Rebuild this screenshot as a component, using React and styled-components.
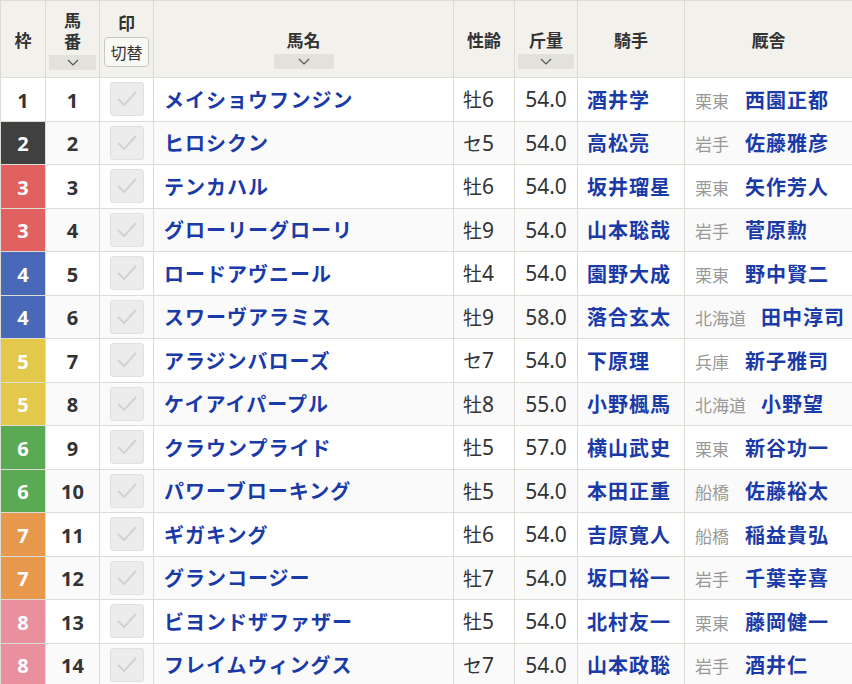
import React from "react";
import styled, { createGlobalStyle } from "styled-components";

const G = createGlobalStyle`
  body { margin: 0; background: #fff; font-family: "Noto Sans CJK JP", "Noto Sans", sans-serif; }
`;

const Table = styled.table`
  border-collapse: collapse;
  table-layout: fixed;
  width: 852px;
  border-left: 1px solid #dcdcd4;
  border-top: 1px solid #dcdcd4;
`;
const Th = styled.th`
  background: #f2f1ec;
  border: 1px solid #dcdcd4;
  height: 76px;
  padding: 0;
  font-size: 17px;
  font-weight: 700;
  color: #333;
  vertical-align: middle;
`;
const HeadStack = styled.div`
  display: flex; flex-direction: column; align-items: center; justify-content: center;
  line-height: 21px;
`;
const Sort = styled.div`
  width: ${p => p.w}px; height: 15px; background: #e2e1dc;
  display: flex; align-items: center; justify-content: center;
  margin-top: 4px;
`;
const Toggle = styled.div`
  border: 1px solid #c8c8c0; border-radius: 4px; background: #f8f8f5;
  font-size: 16px; font-weight: 400; padding: 2px 5px; line-height: 24px; margin-top: 4px;
`;
const Tr = styled.tr`
  background: ${p => (p.alt ? "#fafafa" : "#fff")};
`;
const Td = styled.td`
  border: 1px solid #dcdcd4;
  height: 42.5px;
  padding: 0 ${p => p.pad || 0}px;
  text-align: ${p => p.align || "center"};
  font-size: 19px;
  color: #333;
  white-space: nowrap;
`;
const Waku = styled(Td)`
  background: ${p => p.bg};
  color: ${p => (p.light ? "#333" : "#fff")};
  font-weight: 700;
  font-size: 20px;
`;
const Bold = styled.span`font-weight: 700; color: #333; font-size: 20px;`;
const Link = styled.span`font-weight: 700; color: #1a3aa8; font-size: 20px; letter-spacing: 1px;`;
const Area = styled.span`color: #999; font-size: 17px; display: inline-block; width: 50px;`;
const Check = styled.div`
  width: 32px; height: 32px; margin: 0 auto; border-radius: 3px;
  background: #ececec; border: 1px solid #e0e0e0;
  display: flex; align-items: center; justify-content: center;
`;
const Num = styled.span`font-family: "Noto Sans", sans-serif; font-size: ${p => p.size || 20}px;`;

const colors = { 1: ["#fff", true], 2: ["#404040"], 3: ["#e0615f"], 4: ["#4a68b8"], 5: ["#e3c94b"], 6: ["#5aaa55"], 7: ["#e8984c"], 8: ["#e8909e"] };

const rows = [
  [1, 1, "メイショウフンジン", "牡6", "54.0", "酒井学", "栗東", "西園正都"],
  [2, 2, "ヒロシクン", "セ5", "54.0", "高松亮", "岩手", "佐藤雅彦"],
  [3, 3, "テンカハル", "牡6", "54.0", "坂井瑠星", "栗東", "矢作芳人"],
  [3, 4, "グローリーグローリ", "牡9", "54.0", "山本聡哉", "岩手", "菅原勲"],
  [4, 5, "ロードアヴニール", "牡4", "54.0", "園野大成", "栗東", "野中賢二"],
  [4, 6, "スワーヴアラミス", "牡9", "58.0", "落合玄太", "北海道", "田中淳司"],
  [5, 7, "アラジンバローズ", "セ7", "54.0", "下原理", "兵庫", "新子雅司"],
  [5, 8, "ケイアイパープル", "牡8", "55.0", "小野楓馬", "北海道", "小野望"],
  [6, 9, "クラウンプライド", "牡5", "57.0", "横山武史", "栗東", "新谷功一"],
  [6, 10, "パワーブローキング", "牡5", "54.0", "本田正重", "船橋", "佐藤裕太"],
  [7, 11, "ギガキング", "牡6", "54.0", "吉原寛人", "船橋", "稲益貴弘"],
  [7, 12, "グランコージー", "牡7", "54.0", "坂口裕一", "岩手", "千葉幸喜"],
  [8, 13, "ビヨンドザファザー", "牡5", "54.0", "北村友一", "栗東", "藤岡健一"],
  [8, 14, "フレイムウィングス", "セ7", "54.0", "山本政聡", "岩手", "酒井仁"],
];

const Chev = () => (
  <svg width="12" height="7" viewBox="0 0 12 7"><path d="M1 1l5 5 5-5" fill="none" stroke="#555" strokeWidth="1.2" /></svg>
);
const Tick = () => (
  <svg width="22" height="18" viewBox="0 0 22 18"><path d="M2 9l6 6L20 2" fill="none" stroke="#d2d2d2" strokeWidth="2" /></svg>
);

export default function App() {
  return (
    <>
      <G />
      <Table>
        <colgroup>
          <col style={{ width: 45 }} /><col style={{ width: 54 }} /><col style={{ width: 54 }} />
          <col style={{ width: 300 }} /><col style={{ width: 61 }} /><col style={{ width: 63 }} />
          <col style={{ width: 107 }} /><col style={{ width: 168 }} />
        </colgroup>
        <thead>
          <tr>
            <Th>枠</Th>
            <Th><HeadStack><span>馬</span><span>番</span><Sort w={47}><Chev /></Sort></HeadStack></Th>
            <Th><HeadStack><span>印</span><Toggle>切替</Toggle></HeadStack></Th>
            <Th><HeadStack><span style={{ marginTop: 20 }}>馬名</span><Sort w={60}><Chev /></Sort></HeadStack></Th>
            <Th>性齢</Th>
            <Th><HeadStack><span style={{ marginTop: 20 }}>斤量</span><Sort w={56}><Chev /></Sort></HeadStack></Th>
            <Th>騎手</Th>
            <Th>厩舎</Th>
          </tr>
        </thead>
        <tbody>
          {rows.map((r, i) => {
            const [bg, light] = colors[r[0]];
            return (
              <Tr key={i} alt={i % 2 === 1}>
                <Waku bg={bg} light={light}><Num>{r[0]}</Num></Waku>
                <Td><Bold><Num>{r[1]}</Num></Bold></Td>
                <Td><Check><Tick /></Check></Td>
                <Td align="left" pad={10}><Link>{r[2]}</Link></Td>
                <Td align="left" pad={9}>{r[3].slice(0, 1)}<Num size={21}>{r[3].slice(1)}</Num></Td>
                <Td><Num size={21}>{r[4]}</Num></Td>
                <Td align="left" pad={9}><Link>{r[5]}</Link></Td>
                <Td align="left" pad={10}>
                  <Area style={{ width: r[6].length === 3 ? 66 : 50 }}>{r[6]}</Area>
                  <Link>{r[7]}</Link>
                </Td>
              </Tr>
            );
          })}
        </tbody>
      </Table>
    </>
  );
}
